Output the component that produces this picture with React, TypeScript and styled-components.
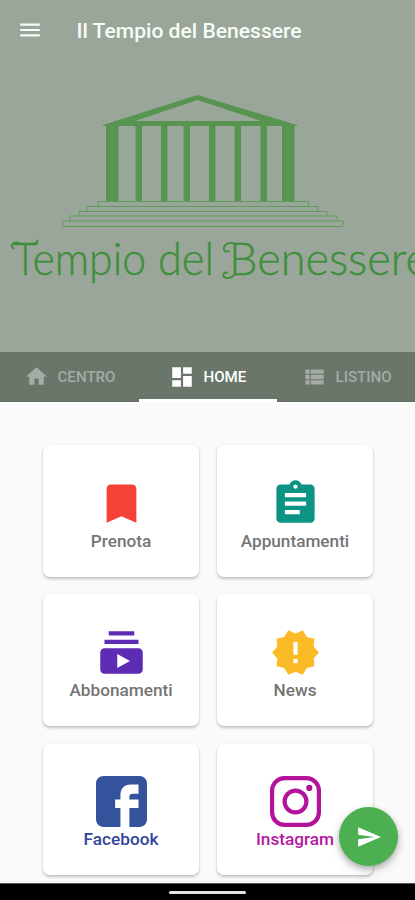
import React from "react";
import styled, { createGlobalStyle } from "styled-components";

const GlobalStyle = createGlobalStyle`
  * { box-sizing: border-box; }
  body { margin: 0; background: #fafafa; font-family: Roboto, "Liberation Sans", sans-serif; }
`;

const Screen = styled.div`
  width: 415px;
  height: 900px;
  display: flex;
  flex-direction: column;
  overflow: hidden;
  background: #fafafa;
  position: relative;
`;

const Hero = styled.header`
  height: 352px;
  flex: none;
  background: #9aa699;
`;

const AppBar = styled.div`
  height: 62px;
  padding-left: 17px;
  display: flex;
  align-items: center;
  color: #f8fcf7;
`;

const MenuButton = styled.button`
  display: flex;
  border: 0;
  padding: 0;
  margin-top: -3px;
  background: none;
  color: inherit;
`;

const Title = styled.h1`
  margin: 0 0 0 33.5px;
  font-size: 21.1px;
  line-height: 26px;
  font-weight: 500;
  white-space: nowrap;
`;

const Logo = styled.svg`
  display: block;
  width: 415px;
  height: 238px;
  overflow: hidden;
`;

const Wordmark = styled.text`
  font-family: Lato, sans-serif;
  font-size: 46px;
  font-weight: 300;
  fill: #3e8f3b;
  stroke: #3e8f3b;
  stroke-width: 0.4px;
`;

const Tabs = styled.nav`
  height: 50px;
  flex: none;
  display: grid;
  grid-template-columns: 139px 138px 138px;
  background: #6a766a;
  border-bottom: 1px solid #626d62;
`;

const Tab = styled.div<{ $active?: boolean; $shift?: number }>`
  height: 50px;
  display: flex;
  align-items: center;
  gap: 8.5px;
  padding: 2px 0 0 ${(p) => p.$shift ?? 24}px;
  font-size: 15.1px;
  font-weight: 500;
  white-space: nowrap;
  color: ${(p) => (p.$active ? "#ffffff" : "#a5aba5")};
  border-bottom: 3px solid ${(p) => (p.$active ? "#ffffff" : "transparent")};
`;

const TabLabel = styled.span`
  padding-top: 1px;
`;

const Grid = styled.main`
  flex: 1;
  min-height: 0;
  display: grid;
  grid-template-columns: 156px 156px;
  grid-auto-rows: 131.6px;
  gap: 17.6px 18px;
  padding: 43.2px 0 0 43px;
`;

const Card = styled.div<{ $ink?: string }>`
  display: flex;
  flex-direction: column;
  align-items: center;
  padding-top: 32.8px;
  border-radius: 7px;
  background: #fff;
  box-shadow: 0 2px 3px rgba(0, 0, 0, 0.22), 0 0 2px rgba(0, 0, 0, 0.07);
  color: ${(p) => p.$ink ?? "#757575"};
`;

const CardLabel = styled.span`
  margin-top: 1px;
  font-size: 17.2px;
  line-height: 22px;
  font-weight: 500;
`;

const Fab = styled.button`
  position: absolute;
  left: 339.3px;
  top: 807.3px;
  width: 59px;
  height: 59px;
  border: 0;
  padding: 0;
  border-radius: 50%;
  display: flex;
  align-items: center;
  justify-content: center;
  background: #4caf50;
  color: #fff;
  box-shadow: 0 3px 6px rgba(0, 0, 0, 0.26), 0 5px 12px rgba(0, 0, 0, 0.1);
`;

const SystemBar = styled.footer`
  height: 17px;
  flex: none;
  display: flex;
  align-items: center;
  justify-content: center;
  background: #000;
  border-top: 1px solid #555;
`;

const HomeHandle = styled.div`
  width: 77px;
  height: 3px;
  border-radius: 2px;
  background: #e6e6e6;
`;

const Icon = ({ d, size, color = "currentColor" }: { d: string; size: number; color?: string }) => (
  <svg width={size} height={size} viewBox="0 0 24 24" fill={color}>
    <path d={d} />
  </svg>
);

const paths = {
  menu: "M3 18h18v-2H3v2zm0-5h18v-2H3v2zm0-7v2h18V6H3z",
  home: "M10 20v-6h4v6h5v-8h3L12 3 2 12h3v8z",
  dashboard: "M3 13h8V3H3v10zm0 8h8v-6H3v6zm10 0h8V11h-8v10zm0-18v6h8V3h-8z",
  list: "M4 14h4v-4H4v4zm0 5h4v-4H4v4zM4 9h4V5H4v4zm5 5h12v-4H9v4zm0 5h12v-4H9v4zM9 5v4h12V5H9z",
  bookmark: "M17 3H7c-1.1 0-1.99.9-1.99 2L5 21l7-3 7 3V5c0-1.1-.9-2-2-2z",
  assignment:
    "M19 3h-4.18C14.4 1.84 13.3 1 12 1c-1.3 0-2.4.84-2.82 2H5c-1.1 0-2 .9-2 2v14c0 1.1.9 2 2 2h14c1.1 0 2-.9 2-2V5c0-1.1-.9-2-2-2zm-7 0c.55 0 1 .45 1 1s-.45 1-1 1-1-.45-1-1 .45-1 1-1zm2 14H7v-2h7v2zm3-4H7v-2h10v2zm0-4H7V7h10v2z",
  subscriptions:
    "M20 8H4V6h16v2zm-2-6H6v2h12V2zm4 10v8c0 1.1-.9 2-2 2H4c-1.1 0-2-.9-2-2v-8c0-1.1.9-2 2-2h16c1.1 0 2 .9 2 2zm-6 4l-6-3.270v6.530L16 16z",
  news: "M23 12l-2.440-2.780.34-3.680-3.610-.82-1.890-3.180L12 3 8.600 1.540 6.710 4.720l-3.610.81.34 3.680L1 12l2.440 2.780-.34 3.690 3.610.82 1.890 3.180L12 21l3.400 1.460 1.890-3.180 3.610-.82-.34-3.680L23 12zm-10 5h-2v-2h2v2zm0-4h-2V7h2v6z",
  facebook:
    "M3.6 0h16.8C22.5 0 24 1.500 24 3.600v16.800c0 2.100-1.500 3.600-3.600 3.600h-4.700v-8.900H20V11h-4.300V9.900c0-1 .5-1.500 1.500-1.500H20V4h-3.600c-3.200 0-4.900 2-4.900 5.100V11H9v4.100h2.500V24H3.600C1.500 24 0 22.500 0 20.400V3.600C0 1.500 1.500 0 3.600 0z",
  send: "M2.01 21L23 12 2.01 3 2 10l15 2-15 2z",
};

const InstagramIcon = () => (
  <svg width="51" height="51" viewBox="0 0 51 51" fill="none" stroke="#b5129b" strokeWidth="4.2">
    <rect x="2.1" y="2.1" width="46.800" height="46.800" rx="12.5" />
    <circle cx="25.500" cy="25.500" r="10.900" />
    <circle cx="39.300" cy="11.900" r="3.100" fill="#b5129b" stroke="none" />
  </svg>
);

const TempleLogo = () => (
  <Logo viewBox="0 62 415 238">
    <g fill="#56944f">
      <path d="M103 125 197.500 95 297 125V126H103zM135 121H261L197.500 100z" fillRule="evenodd" />
      <path d="M106 124h12.500v77H106zM135.500 124h6.500v77h-6.500zM161 124h6.500v77H161zM183.500 124h6.500v77h-6.500zM209 124h6.500v77H209zM234.500 124h6.500v77h-6.500zM260.500 124h6.500v77h-6.500zM282 124h12.500v77H282z" />
    </g>
    <path
      d="M98 206V201.500H308.500V206M87 211V206.500H318V211M79 215.500V211.500H327V215.500M70 220.500V216H337V220.500M62.500 221H343V226.500H62.500z"
      fill="none"
      stroke="#609b59"
      strokeWidth="1"
    />
    <Wordmark x="13" y="275" textLength="133" lengthAdjust="spacingAndGlyphs">Tempio</Wordmark>
    <Wordmark x="158" y="275" textLength="56" lengthAdjust="spacingAndGlyphs">del</Wordmark>
    <Wordmark x="229" y="275" textLength="200" lengthAdjust="spacingAndGlyphs">Benessere</Wordmark>
    <g fill="none" stroke="#3e8f3b" strokeWidth="1.8" strokeLinecap="round">
      <path d="M14 248.500q-3-1-2-4q3-3 7-1.500M34 243.500q3 0 3.500-3" />
      <path d="M235 243.500q-8-2-11 3.500q-1 6 5 4M235 274.500q-7 6-11.500 2q-1-4 4-4" />
    </g>
  </Logo>
);

const cards = [
  { label: "Prenota", icon: <Icon d={paths.bookmark} size={51} color="#f44336" /> },
  { label: "Appuntamenti", icon: <Icon d={paths.assignment} size={51} color="#0b9383" /> },
  { label: "Abbonamenti", icon: <Icon d={paths.subscriptions} size={51} color="#5e2bb5" /> },
  { label: "News", icon: <Icon d={paths.news} size={51} color="#fbbb26" /> },
  { label: "Facebook", ink: "#31459b", icon: <Icon d={paths.facebook} size={51} color="#35539d" /> },
  { label: "Instagram", ink: "#b5179e", icon: <InstagramIcon /> },
];

export default function App() {
  return (
    <Screen>
      <GlobalStyle />
      <Hero>
        <AppBar>
          <MenuButton aria-label="Menu">
            <Icon d={paths.menu} size={26} />
          </MenuButton>
          <Title>Il Tempio del Benessere</Title>
        </AppBar>
        <TempleLogo />
      </Hero>
      <Tabs>
        <Tab $shift={24}>
          <Icon d={paths.home} size={25} />
          <TabLabel>CENTRO</TabLabel>
        </Tab>
        <Tab $active $shift={30}>
          <Icon d={paths.dashboard} size={26} />
          <TabLabel>HOME</TabLabel>
        </Tab>
        <Tab $shift={24}>
          <Icon d={paths.list} size={26} />
          <TabLabel>LISTINO</TabLabel>
        </Tab>
      </Tabs>
      <Grid>
        {cards.map((c) => (
          <Card key={c.label} $ink={c.ink}>
            {c.icon}
            <CardLabel>{c.label}</CardLabel>
          </Card>
        ))}
      </Grid>
      <SystemBar>
        <HomeHandle />
      </SystemBar>
      <Fab aria-label="Invia">
        <Icon d={paths.send} size={26} />
      </Fab>
    </Screen>
  );
}
